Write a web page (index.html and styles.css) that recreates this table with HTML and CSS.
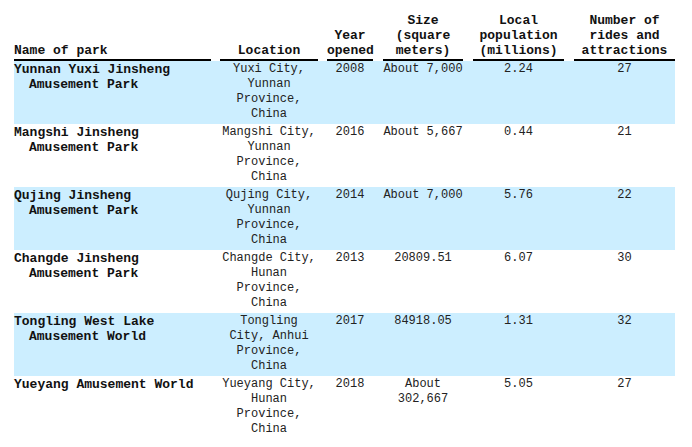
FILE: index.html
```html
<!DOCTYPE html>
<html lang="en">
<head>
    <meta charset="UTF-8">
    <title>Jinsheng Amusement Parks</title>
    <link rel="stylesheet" href="styles.css">
</head>
<body>

<table class="parks">
    <colgroup>
        <col class="c-name">
        <col class="c-loc">
        <col class="c-year">
        <col class="c-size">
        <col class="c-pop">
        <col class="c-rides">
    </colgroup>
    <thead>
        <tr>
            <th class="name"><div>Name of park</div></th>
            <th class="loc"><div>Location</div></th>
            <th class="year"><div>Year opened</div></th>
            <th class="size"><div>Size (square meters)</div></th>
            <th class="pop"><div>Local population (millions)</div></th>
            <th class="rides"><div>Number of rides and attractions</div></th>
        </tr>
    </thead>
    <tbody>
        <tr class="shaded">
            <td class="name">Yunnan Yuxi Jinsheng Amusement Park</td>
            <td class="loc">Yuxi City, Yunnan Province, China</td>
            <td class="year">2008</td>
            <td class="size">About 7,000</td>
            <td class="pop">2.24</td>
            <td class="rides">27</td>
        </tr>
        <tr>
            <td class="name">Mangshi Jinsheng Amusement Park</td>
            <td class="loc">Mangshi City, Yunnan Province, China</td>
            <td class="year">2016</td>
            <td class="size">About 5,667</td>
            <td class="pop">0.44</td>
            <td class="rides">21</td>
        </tr>
        <tr class="shaded">
            <td class="name">Qujing Jinsheng Amusement Park</td>
            <td class="loc">Qujing City, Yunnan Province, China</td>
            <td class="year">2014</td>
            <td class="size">About 7,000</td>
            <td class="pop">5.76</td>
            <td class="rides">22</td>
        </tr>
        <tr>
            <td class="name">Changde Jinsheng Amusement Park</td>
            <td class="loc">Changde City, Hunan Province, China</td>
            <td class="year">2013</td>
            <td class="size">20809.51</td>
            <td class="pop">6.07</td>
            <td class="rides">30</td>
        </tr>
        <tr class="shaded">
            <td class="name">Tongling West Lake Amusement World</td>
            <td class="loc">Tongling City, Anhui Province, China</td>
            <td class="year">2017</td>
            <td class="size">84918.05</td>
            <td class="pop">1.31</td>
            <td class="rides">32</td>
        </tr>
        <tr>
            <td class="name">Yueyang Amusement World</td>
            <td class="loc">Yueyang City, Hunan Province, China</td>
            <td class="year">2018</td>
            <td class="size">About 302,667</td>
            <td class="pop">5.05</td>
            <td class="rides">27</td>
        </tr>
    </tbody>
</table>

</body>
</html>
```

FILE: styles.css
```css
body {
    margin: 0;
    padding: 13px 0 0 14px;
    background-color: #fff;
    font-family: "Liberation Mono", "DejaVu Sans Mono", monospace;
    color: #222;
}

/* Tabla de parques */
.parks {
    width: 661px;
    table-layout: fixed;
    border-collapse: separate;
    border-spacing: 0;
}

.c-name { width: 201px; }
.c-loc { width: 108px; }
.c-year { width: 55px; }
.c-size { width: 90px; }
.c-pop { width: 101px; }
.c-rides { width: 106px; }

.parks th {
    font-size: 13px;
    line-height: 15px;
    font-weight: bold;
    color: #111;
    vertical-align: bottom;
    text-align: center;
    padding: 0 5px;
}

.parks th div {
    padding-bottom: 1px;
    border-bottom: 2px solid #000;
}

.parks th.name {
    text-align: left;
    padding: 0 4px 0 0;
}

.parks th.year {
    padding: 0 5px 0 4px;
}

.parks th.rides {
    padding: 0 0 0 5px;
}

.parks td {
    font-size: 12px;
    line-height: 15px;
    vertical-align: top;
    text-align: center;
    padding: 1px 5px 2px;
}

/* mas margen a la derecha para que los nombres largos corten como en el original */
.parks td.name {
    font-size: 13px;
    font-weight: bold;
    color: #111;
    text-align: left;
    padding: 1px 8px 2px 15px;
    text-indent: -15px;
}

.parks td.year {
    padding-left: 4px;
}

.parks td.rides {
    padding-right: 0;
}

.parks tr.shaded td {
    background-color: #cceeff;
}
```
